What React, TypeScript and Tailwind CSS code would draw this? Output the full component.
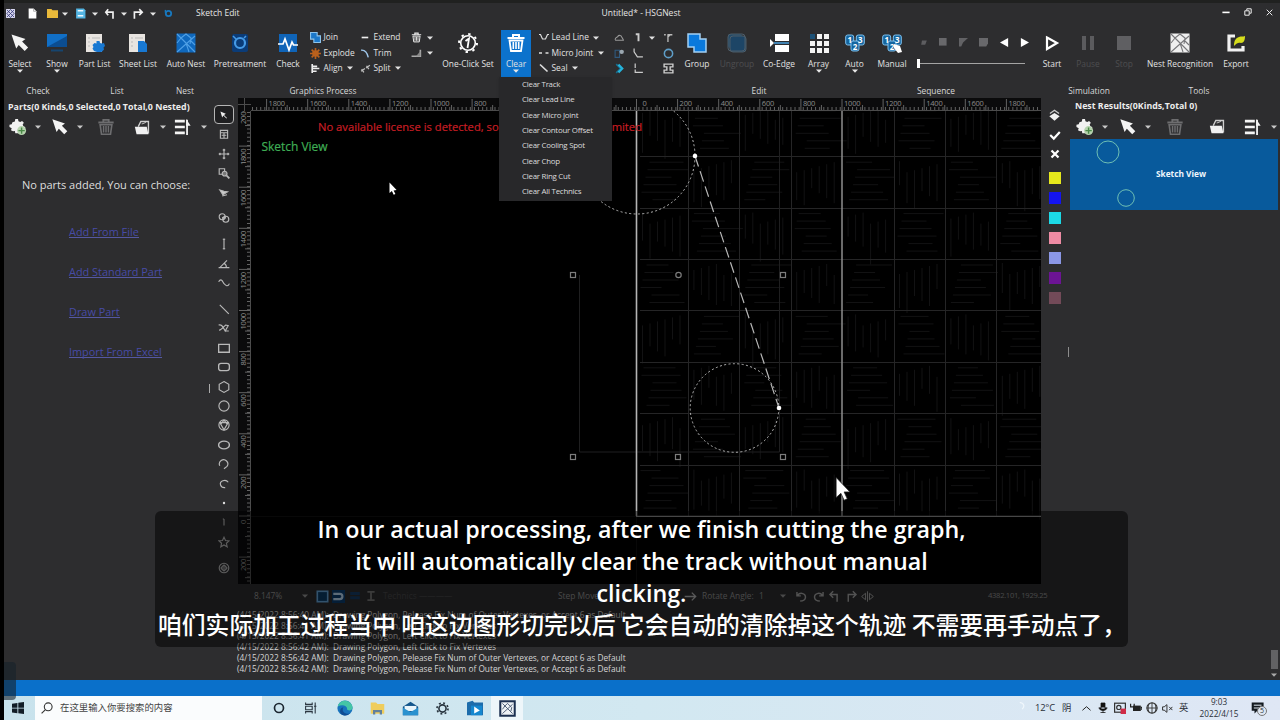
import type { ReactNode } from "react";

const Caret = ({ className = "" }: { className?: string }) => (
  <svg viewBox="0 0 6 4" className={`h-[4px] w-[6px] shrink-0 ${className}`}>
    <path d="M0 0.5h6L3 3.7z" fill="currentColor" />
  </svg>
);

const Icon = ({
  children,
  className = "h-5 w-5",
  box = 20,
}: {
  children: ReactNode;
  className?: string;
  box?: number;
}) => (
  <svg
    viewBox={`0 0 ${box} ${box}`}
    fill="none"
    stroke="none"
    className={`shrink-0 ${className}`}
  >
    {children}
  </svg>
);

const Pointer = ({ className = "h-5 w-5" }: { className?: string }) => (
  <Icon className={className}>
    <path d="M1.500 1.500l14 4.500-3.400 2.600 6 6-3.400 3.400-6-6L6.200 15.500z" fill="#f4f4f4" />
  </Icon>
);

const Trash = ({ color, className }: { color: string; className?: string }) => (
  <Icon className={className}>
    <path d="M1.500 5h17M7 4.500V2h6v2.500" stroke={color} strokeWidth="2" />
    <path d="M3.500 7.500h13L15 18H5z" stroke={color} strokeWidth="1.800" />
    <path d="M7.300 9v7M10 9v7M12.700 9v7" stroke={color} strokeWidth="1.600" />
  </Icon>
);

const GearPlus = () => (
  <Icon className="h-[18px] w-[18px]">
    <path
      d="M7 1h3l.5 2.500 2 1 2-1.300 2 2-1.300 2 .8 2L18 10v2l-4 5H7l-.5-2.500-2 .3-2.300-1.300L3 11.500.5 10V7.500L3 7l.8-2.200L6.500 4z"
      fill="#f1f1f1"
    />
    <circle cx="14" cy="14" r="5" fill="#b6d3ae" />
    <path d="M14 10.500v7M10.500 14h7" stroke="#4b8b48" strokeWidth="1.600" />
  </Icon>
);

const Folder = () => (
  <Icon className="h-[17px] w-[17px]">
    <path d="M5 9l3-6h9v14" stroke="#cfcfcf" strokeWidth="1.600" />
    <path d="M1 9h14l2 9H3z" fill="#f1f1f1" />
    <path d="M9 6l5-2" stroke="#cfcfcf" strokeWidth="1.200" />
  </Icon>
);

const ListArrow = () => (
  <Icon className="h-[18px] w-[18px]">
    <path d="M1 3.500h11M1 10h11M1 16.500h11" stroke="#f4f4f4" strokeWidth="3" />
    <path d="M14.500 19V2" stroke="#f4f4f4" strokeWidth="2" />
    <path d="M13.500 1l5 7.500h-5z" fill="#f4f4f4" />
  </Icon>
);

const NestGlyph = ({ line, fill }: { line: string; fill: string }) => (
  <>
    <rect x="0.500" y="0.500" width="19" height="19" fill={fill} />
    <path
      d="M1 1l18 18M1 19L19 3M5 5l5-4 5 4-1 6M1 10l4-5M10 10l3 9M14 7l5 5"
      stroke={line}
      strokeWidth="1.100"
    />
  </>
);

const RibbonButton = ({
  label,
  width,
  caret,
  dim,
  children,
}: {
  label: string;
  width: string;
  caret?: boolean;
  dim?: boolean;
  children: ReactNode;
}) => (
  <div className={`flex h-[47px] shrink-0 flex-col items-center pt-[3px] ${width}`}>
    {children}
    <span
      className={`mt-[5px] text-[8.400px] leading-[12px] whitespace-nowrap ${
        dim ? "text-[#4d4d50]" : "text-[#e2e2e2]"
      }`}
    >
      {label}
    </span>
    {caret && <Caret className="mt-[-1px] text-[#e8e8e8]" />}
  </div>
);

const SmallRow = ({
  label,
  caret,
  children,
}: {
  label?: string;
  caret?: boolean;
  children: ReactNode;
}) => (
  <div className="flex h-[15.400px] items-center gap-[2.500px]">
    {children}
    {label && <span className="text-[8.400px] whitespace-nowrap">{label}</span>}
    {caret && <Caret className="ml-0.5" />}
  </div>
);

const s = "h-[11px] w-[11px]";

const clearMenu = [
  "Clear Track",
  "Clear Lead Line",
  "Clear Micro Joint",
  "Clear Contour Offset",
  "Clear Cooling Spot",
  "Clear Chop",
  "Clear Ring Cut",
  "Clear All Technics",
];

const TitleBar = () => (
  <div className="flex h-6 shrink-0 items-center border-t-[3px] border-[#202120] text-[8.500px] text-[#e6e6e6]">
    <div className="flex w-[192px] items-center">
      <Icon className="ml-[2px] h-[9px] w-[9px]">
        <rect width="20" height="20" fill="#d8d8ee" />
        <path d="M2 2l16 16M18 2L2 18M10 1l8 9-8 9-8-9z" stroke="#34367a" strokeWidth="1.800" />
      </Icon>
      <Icon className="ml-[12px] h-[11px] w-[11px]">
        <path d="M3 1h9l5 5v13H3z" fill="#fff" />
        <path d="M12 1v5h5" stroke="#777" />
      </Icon>
      <Icon className="ml-[9px] h-[11px] w-[11px]">
        <path d="M0 2h8l2 2h10v14H0z" fill="#e9b93a" />
      </Icon>
      <Caret className="ml-[4px]" />
      <Icon className="ml-[7px] h-[11px] w-[11px]">
        <path d="M2 1h14l3 3v15H2z" fill="#53b4e2" />
        <path d="M5 5h10M5 14h10" stroke="#eef8fd" strokeWidth="3" />
      </Icon>
      <Caret className="ml-[6px]" />
      <Icon className="ml-[6px] h-[12px] w-[12px]">
        <path d="M7 2L3 7l4 5M3 7h12v11" stroke="#f0f0f0" strokeWidth="2.800" />
      </Icon>
      <Caret className="ml-[5px]" />
      <Icon className="ml-[5px] h-[12px] w-[12px]">
        <path d="M12 2l5 5-5 5M17 7H4v11" stroke="#f0f0f0" strokeWidth="2.800" />
      </Icon>
      <Caret className="ml-[6px]" />
      <Icon className="ml-[8px] h-[9px] w-[9px]">
        <circle cx="10" cy="10" r="6" stroke="#1878be" strokeWidth="4" />
        <path d="M3 2v6" stroke="#1878be" strokeWidth="3" />
      </Icon>
    </div>
    <span className="w-[300px]">Sketch Edit</span>
    <span className="w-[290px] text-center">Untitled* - HSGNest</span>
    <div className="ml-auto flex items-center gap-[14px] pr-[7px] pb-[3px]">
      <Icon className="h-[8px] w-[8px]">
        <path d="M1 11h18" stroke="#fff" strokeWidth="4" />
      </Icon>
      <Icon className="h-[8px] w-[8px]">
        <path d="M2 7h11v11H2zM7 6V2h11v11h-4" stroke="#eee" strokeWidth="2.500" />
      </Icon>
      <Icon className="h-[7px] w-[7px]">
        <path d="M2 2l16 16M18 2L2 18" stroke="#eee" strokeWidth="2.800" />
      </Icon>
    </div>
  </div>
);

const Ribbon = () => (
  <div className="h-[74px] shrink-0 pt-[6px] text-[#e2e2e2]">
    <div className="flex h-[53px]">
      <RibbonButton label="Select" width="w-[32px]" caret>
        <Pointer />
      </RibbonButton>
      <RibbonButton label="Show" width="w-[42px]" caret>
        <Icon>
          <rect y="1" width="20" height="13" fill="#116fc6" />
          <path d="M0 14L20 3v11z" fill="#0b4d91" />
          <path d="M4 17.500h12" stroke="#16456f" strokeWidth="2" />
        </Icon>
      </RibbonButton>
      <RibbonButton label="Part List" width="w-[33px]">
        <Icon>
          <rect x="1" y="1" width="16" height="18" fill="#e8e4e0" />
          <path d="M3 5h2M3 9h2M3 13h2M7 5h8" stroke="#bbb" />
          <path
            d="M11.500 8h3l.5 2 2 .5 2-.5 1 3-1.500 1.500.5 2-2.500 2.500H12l-3-1-1.500-2.500 1-1.500-1-2 2-2 2 .5z"
            fill="#1878d2"
          />
        </Icon>
      </RibbonButton>
      <RibbonButton label="Sheet List" width="w-[54px]">
        <Icon>
          <rect x="1" y="1" width="16" height="18" fill="#e8e4e0" />
          <path d="M3 5h2M3 9h2M3 13h2M7 5h8" stroke="#bbb" />
          <path d="M10 8h6l3 3v8h-9z" fill="#1878d2" />
        </Icon>
      </RibbonButton>
      <RibbonButton label="Auto Nest" width="w-[42px]">
        <Icon>
          <NestGlyph fill="#0f68bd" line="#4fa0e6" />
        </Icon>
      </RibbonButton>
      <RibbonButton label="Pretreatment" width="w-[66px]">
        <Icon>
          <rect x="2" y="1" width="16" height="18" rx="2" fill="#0b3c78" />
          <circle cx="10" cy="10" r="5" stroke="#469be6" strokeWidth="2.200" />
          <path d="M3 3l3 3M14 5l2-2" stroke="#469be6" strokeWidth="1.500" />
        </Icon>
      </RibbonButton>
      <RibbonButton label="Check" width="w-[30px]">
        <Icon>
          <rect x="1" y="1" width="18" height="18" fill="#0f64b8" />
          <path d="M0 11h5l2-5 4 11 3-8 1.500 3H20" stroke="#fff" strokeWidth="1.700" />
        </Icon>
      </RibbonButton>
      <div className="w-[57px] shrink-0 pl-[7px]">
        <SmallRow label="Join">
          <Icon className={s}>
            <path d="M1 1h12v6h6v12H7v-6H1z" fill="#1c78c9" stroke="#8dc3ea" strokeWidth="2" />
          </Icon>
        </SmallRow>
        <SmallRow label="Explode">
          <Icon className={s}>
            <path
              d="M10 0v20M0 10h20M3 3l14 14M17 3L3 17"
              stroke="#b9601c"
              strokeWidth="3"
            />
            <circle cx="10" cy="10" r="6" fill="#b9601c" />
          </Icon>
        </SmallRow>
        <SmallRow label="Align" caret>
          <Icon className={s}>
            <path d="M4 2v16M4 6h9M4 10h13M4 15h8" stroke="#eee" strokeWidth="3" />
          </Icon>
        </SmallRow>
      </div>
      <div className="w-[50px] shrink-0">
        <SmallRow label="Extend">
          <Icon className={s}>
            <path d="M3 10h12" stroke="#eee" strokeWidth="3" />
          </Icon>
        </SmallRow>
        <SmallRow label="Trim">
          <Icon className={s}>
            <path d="M2 4c8-1 11 4 13 13" stroke="#9fc6ea" strokeWidth="2.600" />
          </Icon>
        </SmallRow>
        <SmallRow label="Split" caret>
          <Icon className={s}>
            <path d="M2 15l7-5M11 9l7-5M3 11l4 6M12 5l4 6" stroke="#bbb" strokeWidth="2.400" />
          </Icon>
        </SmallRow>
      </div>
      <div className="w-[30px] shrink-0 pl-px">
        <SmallRow caret>
          <Trash color="#eee" className={s} />
        </SmallRow>
        <SmallRow caret>
          <Icon className={s}>
            <path d="M1 15h16V3" stroke="#aaa" strokeWidth="3" />
            <path d="M9 15L17 6v9z" fill="#888" />
          </Icon>
        </SmallRow>
      </div>
      <RibbonButton label="One-Click Set" width="w-[56px]">
        <Icon>
          <circle cx="10" cy="10" r="7.300" stroke="#fff" strokeWidth="1.600" />
          <circle
            cx="10"
            cy="10"
            r="9"
            stroke="#fff"
            strokeWidth="2"
            strokeDasharray="2.400 4.660"
          />
          <path d="M7.500 8l3.500-2.500L9.500 15" stroke="#fff" strokeWidth="1.800" />
        </Icon>
      </RibbonButton>
      <div className="relative ml-[5px] h-[47px] w-[30px] shrink-0 bg-[#0c72cc]">
        <RibbonButton label="Clear" width="w-[30px]" caret>
          <Trash color="#fff" />
        </RibbonButton>
        <div className="absolute top-[47px] left-[-2px] z-10 flex h-[124px] w-[113px] flex-col bg-[#28282a] shadow">
          {clearMenu.map((item) => (
            <span
              key={item}
              className="h-[15.350px] pl-[23px] text-[7.900px] leading-[15.350px] tracking-[-0.250px] whitespace-nowrap text-[#dcdcdc]"
            >
              {item}
            </span>
          ))}
        </div>
      </div>
      <div className="w-[81px] shrink-0 pl-[8px]">
        <SmallRow label="Lead Line" caret>
          <Icon className="h-[10px] w-[10px]">
            <path d="M0 3h3l4 9h6l4-9h3" stroke="#ddd" strokeWidth="2.400" />
          </Icon>
        </SmallRow>
        <SmallRow label="Micro Joint" caret>
          <Icon className="h-[10px] w-[10px]">
            <path d="M0 10h6M13 10h6" stroke="#ddd" strokeWidth="3.400" />
          </Icon>
        </SmallRow>
        <SmallRow label="Seal" caret>
          <Icon className="h-[10px] w-[10px]">
            <path d="M2 3l15 14" stroke="#ddd" strokeWidth="3.400" />
          </Icon>
        </SmallRow>
      </div>
      <div className="w-[21px] shrink-0 pl-[2px]">
        <SmallRow>
          <Icon className={s}>
            <path d="M2 15h16M2 14c0-5 4-4 5-6 2-3 6-2 7 1l3 5" stroke="#999" strokeWidth="2" />
          </Icon>
        </SmallRow>
        <SmallRow>
          <Icon className={s}>
            <path d="M2 4h8v13H2z" stroke="#30597d" strokeWidth="2" />
            <circle cx="14" cy="7" r="4" fill="#9ba7b0" />
          </Icon>
        </SmallRow>
        <SmallRow>
          <Icon className={s}>
            <path d="M4 2l8 8-8 8" stroke="#176f90" strokeWidth="3" />
            <path d="M8 3l7 7-7 7" stroke="#25b4dc" strokeWidth="4" />
          </Icon>
        </SmallRow>
      </div>
      <div className="w-[29px] shrink-0">
        <SmallRow caret>
          <Icon className={s}>
            <path d="M5 4h5v13" stroke="#ccc" strokeWidth="3.500" />
          </Icon>
        </SmallRow>
        <SmallRow>
          <Icon className={s}>
            <path d="M2 1v6l6 9h10" stroke="#ccc" strokeWidth="2.200" />
          </Icon>
        </SmallRow>
        <SmallRow>
          <Icon className={s}>
            <path d="M4 1v8M4 12v5h14" stroke="#ccc" strokeWidth="2.200" />
          </Icon>
        </SmallRow>
      </div>
      <div className="w-[17px] shrink-0 pl-px">
        <SmallRow>
          <Icon className={s}>
            <path d="M2 5h3M8 5h9M9 5v13M9 9l4-4" stroke="#bbb" strokeWidth="2.400" />
          </Icon>
        </SmallRow>
        <SmallRow>
          <Icon className={s}>
            <circle cx="10" cy="10" r="7.500" stroke="#5f9fc9" strokeWidth="2.800" />
          </Icon>
        </SmallRow>
        <SmallRow>
          <Icon className={s}>
            <path
              d="M2 7V2h16v5h-5v6h5v5H2v-5h5V7z"
              stroke="#ccc"
              strokeWidth="2.600"
            />
          </Icon>
        </SmallRow>
      </div>
      <RibbonButton label="Group" width="w-[36px]">
        <Icon>
          <path
            d="M1 1h12v5h6v13H7v-5H1z"
            fill="#0a79dc"
            stroke="#a3d0f3"
            strokeWidth="1.500"
          />
        </Icon>
      </RibbonButton>
      <RibbonButton label="Ungroup" width="w-[44px]" dim>
        <Icon>
          <rect x="1" y="1" width="14" height="14" rx="2" fill="#234a68" />
          <rect x="3" y="3" width="16" height="16" rx="3" fill="#1d4566" stroke="#4d5d69" />
          <rect x="1" y="1" width="17" height="17" rx="3" stroke="#4d5d69" />
        </Icon>
      </RibbonButton>
      <RibbonButton label="Co-Edge" width="w-[40px]">
        <Icon>
          <path d="M6 1h14v7H6zM6 12h14v7H6z" fill="#fff" />
          <path d="M5 10h15" stroke="#4aa8ea" strokeWidth="1.400" />
          <path d="M1 6l4 4-4 4z" fill="#fff" />
        </Icon>
      </RibbonButton>
      <RibbonButton label="Array" width="w-[39px]" caret>
        <Icon>
          <path
            d="M8 1h5v5H8zM15 1h5v5h-5zM1 8h5v5H1zM8 8h5v5H8zM15 8h5v5h-5zM1 15h5v5H1zM8 15h5v5H8zM15 15h5v5h-5z"
            fill="#f4f4f4"
          />
          <path d="M1 1h5v5H1z" fill="#1c5076" />
        </Icon>
      </RibbonButton>
      {["Auto", "Manual"].map((label) => (
        <RibbonButton
          key={label}
          label={label}
          width={label === "Auto" ? "w-[33px]" : "w-[42px]"}
          caret={label === "Auto"}
        >
          <Icon>
            <rect x="0.700" y="2" width="8" height="10" rx="2" fill="#14659f" stroke="#7fc1ee" />
            <rect x="11.300" y="2" width="8" height="10" rx="2" fill="#14659f" stroke="#7fc1ee" />
            <rect x="6" y="8" width="8" height="10" rx="2" fill="#14659f" stroke="#7fc1ee" />
            <text x="4.700" y="10" fontSize="8" fontWeight="700" fill="#fff" textAnchor="middle">1</text>
            <text x="15.300" y="10" fontSize="8" fontWeight="700" fill="#fff" textAnchor="middle">3</text>
            <text x="10" y="16.500" fontSize="8" fontWeight="700" fill="#fff" textAnchor="middle">2</text>
            {label === "Manual" && <path d="M12 11l6 2 2 6-4 1-4-5z" fill="#fff" />}
          </Icon>
        </RibbonButton>
      ))}
      <div className="w-[120px] shrink-0 pl-[4px]">
        <div className="flex h-[24px] items-center justify-between pr-[4px] pl-[3px]">
          <Icon className="h-[8px] w-[8px]">
            <path d="M3 17L5 6h12l-4 11z" fill="#5d5d60" />
          </Icon>
          <Icon className="h-[8px] w-[8px]">
            <rect width="19" height="19" fill="#68686b" />
          </Icon>
          <Icon className="h-[9px] w-[9px]">
            <path d="M0 0h20L9 10l-4 9H0z" fill="#626265" />
          </Icon>
          <Icon className="h-[9px] w-[9px]">
            <path d="M0 0h20v12l-4 7H0z" fill="#68686b" />
          </Icon>
          <Icon className="h-[9px] w-[9px]">
            <path d="M18 0v20L0 10z" fill="#fff" />
          </Icon>
          <Icon className="h-[9px] w-[9px]">
            <path d="M2 0v20l18-10z" fill="#fff" />
          </Icon>
        </div>
        <div className="mt-[5px] flex h-[9px] items-center">
          <div className="h-[9px] w-[3px] bg-white" />
          <div className="h-px w-[105px] bg-[#a4a4a4]" />
        </div>
      </div>
      <RibbonButton label="Start" width="w-[38px]">
        <Icon>
          <path d="M5 4.500L15 10 5 16z" stroke="#fff" strokeWidth="2.200" />
        </Icon>
      </RibbonButton>
      <RibbonButton label="Pause" width="w-[34px]" dim>
        <Icon>
          <path d="M4 3h4v14H4zM12 3h4v14h-4z" fill="#5b5b5e" />
        </Icon>
      </RibbonButton>
      <RibbonButton label="Stop" width="w-[38px]" dim>
        <Icon>
          <path d="M3 3h14v14H3z" fill="#5f5f62" />
        </Icon>
      </RibbonButton>
      <RibbonButton label="Nest Recognition" width="w-[74px]">
        <Icon>
          <NestGlyph fill="#efefef" line="#77777a" />
        </Icon>
      </RibbonButton>
      <RibbonButton label="Export" width="w-[38px]">
        <Icon>
          <path d="M9 3H3v14h14v-4" stroke="#f1f1f1" strokeWidth="3.200" />
          <path d="M8 13c0-6 2-8 5-9 2-1 4 0 6-1 0 4-1 7-4 7-3-.5-4 0-7 3z" fill="#d6dd1d" />
        </Icon>
      </RibbonButton>
    </div>
    <div className="flex text-center text-[8.400px] leading-[15px] text-[#d8d8d8]">
      <span className="w-[68px]">Check</span>
      <span className="w-[90px]">List</span>
      <span className="w-[46px]">Nest</span>
      <span className="mr-[242px] w-[230px]">Graphics Process</span>
      <span className="w-[158px]">Edit</span>
      <span className="w-[196px]">Sequence</span>
      <span className="w-[110px]">Simulation</span>
      <span className="w-[110px]">Tools</span>
    </div>
  </div>
);

const links = ["Add From File", "Add Standard Part", "Draw Part", "Import From Excel"];

const PartsPanel = () => (
  <div className="w-[206px] shrink-0">
    <div className="pt-[1px] pl-[4px] text-[8.850px] leading-4 font-bold whitespace-nowrap text-[#ececec]">
      Parts(0 Kinds,0 Selected,0 Total,0 Nested)
    </div>
    <div className="flex h-6 items-center text-[#c8c8c8]">
      <div className="ml-[5px]">
        <GearPlus />
      </div>
      <Caret className="ml-[8px]" />
      <Pointer className="ml-[10px] h-[18px] w-[18px]" />
      <Caret className="ml-[8px]" />
      <Trash color="#6d6d6f" className="ml-[14px] h-[18px] w-[18px]" />
      <div className="ml-[19px]">
        <Folder />
      </div>
      <Caret className="ml-[9px]" />
      <div className="ml-[8px]">
        <ListArrow />
      </div>
      <Caret className="ml-[9px]" />
    </div>
    <p className="mt-[38px] pl-[18px] text-[11px] leading-4 whitespace-nowrap text-[#dedede]">
      No parts added, You can choose:
    </p>
    <div className="mt-[31px] flex flex-col items-start gap-[26px] pl-[65px]">
      {links.map((link) => (
        <a
          key={link}
          className="h-[14px] border-b border-[#5558a2] text-[10.900px] leading-[15px] whitespace-nowrap text-[#474ba6]"
        >
          {link}
        </a>
      ))}
    </div>
  </div>
);

const toolGroups: ReactNode[][] = [
  [
    <path d="M4 4l9 4-3 2 5 5-1 1-5-5-2 3z" fill="#eee" stroke="none" />,
    <path d="M4 4h12v13H4zM4 8h12M10 8v9M6 12h8" />,
    <path d="M10 2v16M2 10h16M8 4l2-2 2 2M8 16l2 2 2-2M4 8l-2 2 2 2M16 8l2 2-2 2" />,
    <>
      <path d="M2 3h9v9H2z" />
      <circle cx="11" cy="11" r="4" fill="#777" />
      <path d="M14 14l5 5" strokeWidth="3" />
    </>,
    <path d="M3 5l5 8 8-5-6-1zM7 15l8-2" fill="#ccc" />,
  ],
  [
    <>
      <circle cx="7" cy="8" r="5" />
      <circle cx="13" cy="12" r="5" />
      <path d="M7 10l6-1" strokeWidth="3" />
    </>,
  ],
  [
    <path d="M10 1v18M8 2h4M8 18h4" />,
    <path d="M1 16h18M3 16L15 4M10 9c3 1 4 4 4 7" />,
    <path d="M1 8c5-8 7 1 9 3s6 7 9 0" />,
  ],
  [
    <path d="M3 3l15 15" />,
    <path d="M1 5c5-1 7 2 11 10l5-9-4-1c-4 3-6 7-11 9M12 15h6" />,
    <path d="M1 4h18v13H1z" strokeWidth="2.400" />,
    <rect x="1" y="4" width="18" height="12" rx="4" strokeWidth="2.400" />,
    <path d="M10 1l8 4.500v9L10 19l-8-4.500v-9z" />,
    <circle cx="10" cy="10" r="8.500" />,
    <>
      <circle cx="10" cy="10" r="8.500" />
      <path d="M3 6h14l-7 12zM10 2L5 8M10 2l5 6" />
    </>,
    <ellipse cx="10" cy="10" rx="9" ry="6.500" strokeWidth="2.400" />,
    <path d="M3 13a7 7 0 1 1 12 1l-5 4" />,
    <path d="M17 7a7 6 0 1 0-5 9" />,
    <circle cx="10" cy="10" r="2" fill="#ddd" stroke="none" />,
    <path d="M10 5v11M8 5h2" />,
    <path d="M10 2l2.500 5.500 6 .6-4.500 4 1.300 6L10 15l-5.300 3 1.300-6-4.500-4 6-.5z" />,
  ],
  [
    <>
      <circle cx="10" cy="10" r="8" />
      <circle cx="10" cy="10" r="4" />
      <path d="M10 2v16M2 10h16" strokeWidth="1" />
    </>,
  ],
];

const DrawTools = () => (
  <div className="flex w-[28px] shrink-0 flex-col gap-[6.500px] pt-[7.300px]">
    {toolGroups.map((group, g) => (
      <div key={g}>
        {group.map((shape, i) => (
          <div key={i} className="flex h-[19.400px] items-center justify-center">
            <div
              className={`flex h-[19px] w-[20px] items-center justify-center rounded-sm ${
                g === 0 && i === 0 ? "border border-[#b5b5b5] bg-[#1f1f21]" : ""
              }`}
            >
              <svg
                viewBox="0 0 20 20"
                fill="none"
                stroke="#b9b9b9"
                strokeWidth={1.9}
                className="h-[12px] w-[12px]"
              >
                {shape}
              </svg>
            </div>
          </div>
        ))}
      </div>
    ))}
  </div>
);

// Sheet origin sits at (398.5, 418) in the drawing
const UNIT = 41.1;
const CELL = 51.4;
const columns = Array.from({ length: 19 }, (_, i) => i - 9);
const rows = Array.from({ length: 12 }, (_, i) => i - 1);
const gridX = [1, 2, 3, 5, 6, 7];
const gridY = [1, 2, 3, 4, 5, 6, 7];
const hatch = Array.from({ length: 64 * 6 }, (_, i) => {
  const cell = Math.floor(i / 6);
  const col = cell % 8;
  const row = Math.floor(cell / 8);
  const left = 398.5 + col * CELL;
  const top = 418 - (row + 1) * CELL;
  const step = 6 + (i % 6) * 7.5;
  const start = 4 + ((i * 37) % 13);
  const len = 20 + ((i * 29) % 22);
  return (col + row) % 2
    ? `M${left + step} ${top + start}v${len}`
    : `M${left + start} ${top + step}h${len}`;
});
const handles = [
  [335, 177],
  [545, 177],
  [335, 359],
  [440, 359],
  [545, 359],
];

const Canvas = () => (
  <svg viewBox="0 0 803 486" fill="none" className="h-[486px] w-[803px] shrink-0 bg-black">
    <path d={hatch.join("")} stroke="#121213" />
    <g stroke="#252526">
      {gridX.map((n) => (
        <path key={n} d={`M${Math.round(398.5 + n * CELL) + 0.5} 13v405`} />
      ))}
      {gridY.map((n) => (
        <path key={n} d={`M402 ${Math.round(418 - n * CELL) + 0.5}h401`} />
      ))}
      <path d="M341.500 177v177h200V13" stroke="#1f1f20" />
      <path d="M398.500 418v68M13 418.500h385" stroke="#101010" />
    </g>
    <path d="M398.500 13v405" stroke="#b4b4b4" strokeWidth="1.600" />
    <path d="M604 13v405" stroke="#8e8e8e" strokeWidth="1.500" />
    <path d="M398 418.300h405" stroke="#8e8e8e" strokeWidth="1.200" />
    <g stroke="#b8b8b8">
      <circle cx="399" cy="58" r="58" strokeDasharray="2 2.400" />
      <circle cx="496.500" cy="310" r="44.300" strokeDasharray="2 2.400" />
      <path d="M457 58l84 252" strokeDasharray="11 5" strokeWidth="1.200" />
    </g>
    <circle cx="457" cy="58" r="2.300" fill="#fff" />
    <circle cx="541" cy="310" r="2.300" fill="#fff" />
    <g stroke="#7c7c7c" strokeWidth="1.200">
      {handles.map(([x, y]) => (
        <rect key={`${x}-${y}`} x={x - 2.5} y={y - 2.5} width="5" height="5" />
      ))}
      <circle cx="440.500" cy="177" r="2.700" />
    </g>

    <rect width="803" height="13" fill="#0b0b0c" />
    <rect width="13" height="486" fill="#0b0b0c" />
    <g stroke="#636363">
      <path d="M13 12.500h790M12.500 13v473" stroke="#4c4c4c" />
      <path d="M14 10.500h789" strokeDasharray="1 3.110" strokeWidth="3" />
      <path d="M10.500 14v472" strokeDasharray="1 3.110" strokeWidth="3" />
      {columns.map((n) => (
        <path key={n} d={`M${398.5 + n * UNIT} 1v11M${398.5 + (n + 0.5) * UNIT} 7v5`} />
      ))}
      {rows.map((n) => (
        <path key={n} d={`M1 ${418 - n * UNIT}h11M7 ${418 - (n - 0.5) * UNIT}h5`} />
      ))}
    </g>
    <g fill="#8b8b8b" fontSize="7.500">
      {columns.map((n) => (
        <text
          key={n}
          x={398.5 + n * UNIT + (n === 0 ? 6 : 2)}
          y="8.300"
          letterSpacing="-0.200"
        >
          {Math.abs(n * 200)}
        </text>
      ))}
      {rows.map((n) => (
        <text
          key={n}
          letterSpacing="-0.200"
          transform={`translate(7.500 ${418 - n * UNIT + (n === 0 ? 8 : Math.abs(n) >= 5 ? 19 : 14)}) rotate(-90)`}
        >
          {Math.abs(n * 200)}
        </text>
      ))}
    </g>
    <rect width="13" height="13" fill="#0b0b0c" />
    <path d="M6.500 0v13M0 6.500h13" stroke="#4c4c4c" />

    <text x="80" y="33" fontSize="11.200" fill="#c81e24" stroke="#c81e24" strokeWidth="0.200" textLength="324">
      No available license is detected, some functions will be limited
    </text>
    <text x="23.500" y="53" fontSize="12" fill="#3fae55" stroke="#3fae55" strokeWidth="0.200" textLength="66">
      Sketch View
    </text>
    <path
      d="M151.500 84.500v10.500l2.400-2 1.800 3.700 1.700-.8-1.800-3.500 3-.4z"
      fill="#fff"
    />
  </svg>
);

const swatches = [
  "bg-[#e6e81c]",
  "bg-[#1414f0]",
  "bg-[#1cd9e6]",
  "bg-[#ee8ba4]",
  "bg-[#8b97e6]",
  "bg-[#6c1494]",
  "bg-[#724a58]",
];

const ColorTools = () => (
  <div className="flex w-[27px] shrink-0 flex-col items-center pt-[11px]">
    <Icon className="h-[13px] w-[13px]">
      <path d="M3 7l7-5 7 5" stroke="#ccc" strokeWidth="2" />
      <path d="M2 11l8-5 8 5-8 7z" fill="#f1f1f1" />
    </Icon>
    <Icon className="mt-[7px] h-[12px] w-[12px]">
      <path d="M2 10l6 6L18 5" stroke="#fff" strokeWidth="3.600" />
    </Icon>
    <Icon className="mt-[8px] mb-[13px] h-[10px] w-[10px]">
      <path d="M3 3l14 14M17 3L3 17" stroke="#fff" strokeWidth="4.500" />
    </Icon>
    <div className="flex flex-col gap-2">
      {swatches.map((color) => (
        <div key={color} className={`h-3 w-3 ${color}`} />
      ))}
    </div>
  </div>
);

const ResultsPanel = () => (
  <div className="min-w-0 flex-1">
    <div className="pl-[7px] text-[8.800px] leading-4 font-bold whitespace-nowrap text-[#ececec]">
      Nest Results(0Kinds,Total 0)
    </div>
    <div className="flex h-[25px] items-center overflow-hidden text-[#c8c8c8]">
      <div className="ml-[8px]">
        <GearPlus />
      </div>
      <Caret className="ml-[8px]" />
      <Pointer className="ml-[11px] h-[18px] w-[18px]" />
      <Caret className="ml-[8px]" />
      <Trash color="#6d6d6f" className="ml-[15px] h-[18px] w-[18px]" />
      <div className="ml-[25px]">
        <Folder />
      </div>
      <div className="ml-[18px]">
        <ListArrow />
      </div>
      <Caret className="ml-[9px]" />
    </div>
    <div className="mr-[2px] ml-[2px] flex h-[71px] items-center bg-[#085a9c]">
      <svg viewBox="0 0 80 71" className="h-[71px] w-[80px]" fill="none" stroke="#6fbfb4">
        <circle cx="38" cy="13" r="11" />
        <circle cx="56" cy="59" r="8.300" />
      </svg>
      <span className="ml-[6px] text-[8.300px] font-bold text-[#eef6fc]">Sketch View</span>
    </div>
    <div className="mt-[137px] h-[10px] w-px bg-[#8d8d8d]" />
  </div>
);

const StatusBar = () => (
  <div className="flex h-6 items-center pl-[250px] text-[8.400px] whitespace-nowrap text-[#929292]">
    <span className="w-[48px]">8.147%</span>
    <Caret />
    <Icon className="ml-[8px] h-[13px] w-[13px]">
      <rect x="2" y="2" width="16" height="16" fill="#0b3c66" stroke="#64a4d8" strokeWidth="2.500" />
    </Icon>
    <Icon className="ml-[3px] h-[13px] w-[13px]">
      <rect width="20" height="20" fill="#0b3c6e" />
      <path d="M2 6h10a4 4 0 0 1 0 8H2" stroke="#b9d6f0" strokeWidth="3.400" />
    </Icon>
    <Icon className="ml-[4px] h-[12px] w-[12px]">
      <path d="M2 6h16M2 13h16" stroke="#173c66" strokeWidth="5" />
    </Icon>
    <Icon className="ml-[4px] h-[12px] w-[12px]">
      <path d="M4 3h12M4 17h12M10 4v12" stroke="#777" strokeWidth="3" />
    </Icon>
    <span className="ml-[6px] w-[175px] text-[#48484a]">Technics ————</span>
    <span className="w-[126px]">Step Move:</span>
    <Icon className="h-[13px] w-[13px]">
      <path d="M1 10h17M12 4l6 6-6 6" stroke="#b5b5b5" strokeWidth="2" />
    </Icon>
    <span className="ml-[5px] w-[57px]">Rotate Angle:</span>
    <span className="w-[21px]">1</span>
    <Caret />
    <div className="ml-[9px] flex gap-[3.500px]">
      <Icon className="h-[13px] w-[13px]">
        <path d="M3 3v6h6M4 8c4-5 13-3 12 4-1 4-4 5-8 5" stroke="#a5a5a5" strokeWidth="2.200" />
      </Icon>
      <Icon className="h-[13px] w-[13px]">
        <path d="M17 3v6h-6M16 8C12 3 3 5 4 12c1 4 4 5 8 5" stroke="#a5a5a5" strokeWidth="2.200" />
      </Icon>
      <Icon className="h-[13px] w-[13px]">
        <path d="M8 2L3 7l5 5M3 7h11v11" stroke="#a5a5a5" strokeWidth="2.200" />
      </Icon>
      <Icon className="h-[13px] w-[13px]">
        <path d="M12 2l5 5-5 5M17 7H5v11" stroke="#a5a5a5" strokeWidth="2.200" />
      </Icon>
      <Icon className="h-[13px] w-[13px]">
        <path d="M10 2v16M7 5v10l-6-5zM13 5v10l6-5z" stroke="#a5a5a5" strokeWidth="1.500" />
      </Icon>
    </div>
    <span className="ml-[114px] text-[7.600px] tracking-[-0.300px]">4382.101, 1929.25</span>
  </div>
);

const logs = [
  "(4/15/2022 8:56:40 AM):  Drawing Polygon, Pelease Fix Num of Outer Vertexes, or Accept 6 as Default",
  "(4/15/2022 8:56:41 AM):  Drawing Polygon, Left Click to Fix Vertexes",
  "(4/15/2022 8:56:41 AM):  Drawing Polygon, Left Click to Fix Vertexes",
  "(4/15/2022 8:56:42 AM):  Drawing Polygon, Left Click to Fix Vertexes",
  "(4/15/2022 8:56:42 AM):  Drawing Polygon, Pelease Fix Num of Outer Vertexes, or Accept 6 as Default",
  "(4/15/2022 8:56:42 AM):  Drawing Polygon, Pelease Fix Num of Outer Vertexes, or Accept 6 as Default",
];

const LogView = () => (
  <div className="flex h-[72px] justify-between pt-[2px] pr-[2px] pl-[233px]">
    <div className="text-[8.320px] leading-[10.700px] whitespace-pre text-[#d5d5d5]">
      {logs.map((line, i) => (
        <div key={i}>{line}</div>
      ))}
    </div>
    <div className="flex w-[8px] flex-col items-center pt-[40px] text-[#aaa]">
      <div className="h-[19px] w-[7px] bg-[#626264]" />
      <Caret className="mt-[4px]" />
    </div>
  </div>
);

const TaskBar = () => (
  <div className="flex h-[24px] shrink-0 items-center bg-gradient-to-r from-[#c8e2ec] via-[#d2e8f1] to-[#dfe7f5] text-[#2a3038]">
    <div className="flex w-[31px] justify-center pr-[3px]">
      <Icon className="h-[12px] w-[12px]">
        <path d="M0 3l9-1.500V9.500H0zM10.500 1.300L20 0v9.500h-9.500zM0 10.700h9v8L0 17.300zM10.500 10.700H20V20l-9.500-1.300z" fill="#111c26" />
      </Icon>
    </div>
    <div className="flex h-full w-[227px] items-center bg-[#fafcfd] pl-[6px]">
      <Icon className="h-[12px] w-[12px]">
        <circle cx="12" cy="8" r="6.500" stroke="#333" strokeWidth="1.800" />
        <path d="M7 13l-6 6" stroke="#333" strokeWidth="1.800" />
      </Icon>
      <span className="ml-[7px] text-[9.400px] text-[#444]">在这里输入你要搜索的内容</span>
    </div>
    <Icon className="ml-[11px] h-[12px] w-[12px]">
      <circle cx="10" cy="10" r="7.500" stroke="#1b2630" strokeWidth="2.800" />
    </Icon>
    <Icon className="ml-[20px] h-[12px] w-[12px]">
      <path d="M1 1v3h11V1M1 7h11v6H1zM1 19v-3h11v3M17 1v18M15 7h4" stroke="#2b3640" strokeWidth="1.800" />
    </Icon>
    <Icon className="ml-[20px] h-[16px] w-[16px]">
      <circle cx="10" cy="10" r="9.500" fill="#1873bd" />
      <path d="M1 8C3-1 17-2 19.500 9c0 4-5 5-7 3 1-5-6-7-11.500-4z" fill="#45c5a6" />
      <path d="M8 9c-3 5 2 9 8 8-2 2-5 3-8 2.200C2 17 3 10 8 9z" fill="#0f4c93" />
    </Icon>
    <Icon className="ml-[17px] h-[15px] w-[15px]">
      <path d="M1 2h7l2 2h9v13H1z" fill="#efcd5c" />
      <path d="M4 18v-6h12v6h-3v-3H7v3z" fill="#62809a" />
    </Icon>
    <Icon className="ml-[17px] h-[17px] w-[17px]">
      <path d="M1 8l9-6 9 6v10H1z" fill="#14568c" />
      <path d="M3 7h14v6H3z" fill="#e9f5fb" />
      <path d="M1 9l9 5 9-5v9H1z" fill="#2991cf" />
    </Icon>
    <Icon className="ml-[17px] h-[13px] w-[13px]">
      <circle cx="10" cy="10" r="5.500" stroke="#27333d" strokeWidth="2.500" />
      <circle cx="10" cy="10" r="8.500" stroke="#27333d" strokeWidth="2.500" strokeDasharray="3 3.670" />
    </Icon>
    <Icon className="ml-[18px] h-[16px] w-[16px]">
      <path d="M0 3l7-2 2 2h11v16H0z" fill="#1c6cab" />
      <path d="M5 7h14v12H5z" fill="#1587cf" />
      <path d="M9 8l7 5-7 4z" fill="#fff" />
    </Icon>
    <div className="ml-[8px] flex h-full w-[32px] items-center justify-center bg-[#eef6fa]">
      <Icon className="h-[17px] w-[17px]">
        <rect x="1.500" y="1.500" width="17" height="17" fill="#eef2f6" stroke="#1c2f50" strokeWidth="2.400" />
        <path d="M4 4l12 12M4 16L16 5M6 8l4-4 5 5-1 4M4 11l3-4" stroke="#4b5a73" strokeWidth="1.100" />
      </Icon>
    </div>
    <div className="ml-auto flex items-center text-[9.400px]">
      <Icon className="mb-1 h-[8px] w-[8px]">
        <path d="M7 1c11 2 13 10 6 17" stroke="#f0f7fc" strokeWidth="3" />
      </Icon>
      <span className="ml-[10px] w-[27px] tracking-[-0.200px]">12°C</span>
      <span className="w-[20px]">阴</span>
      <Icon className="h-[9px] w-[9px]">
        <path d="M1 14l9-8 9 8" stroke="#222" strokeWidth="2.200" />
      </Icon>
      <Icon className="ml-[7px] h-[12px] w-[10px]">
        <path d="M6 0h8v12H6zM2 9c0 8 16 8 16 0M10 15v5M5 19h10" fill="#111" stroke="#111" strokeWidth="1.500" />
      </Icon>
      <Icon className="ml-[6px] h-[12px] w-[12px]">
        <rect x="1" y="2" width="18" height="15" stroke="#333" strokeWidth="2" />
        <circle cx="8" cy="9" r="3.500" stroke="#333" strokeWidth="2" />
        <rect x="11" y="11" width="9" height="9" fill="#cf2b47" />
      </Icon>
      <Icon className="ml-[4px] h-[12px] w-[12px]">
        <rect x="5" y="6" width="13" height="9" fill="#222" />
        <path d="M1 3v5h6V3M18 9h2v3h-2" stroke="#222" strokeWidth="2" />
      </Icon>
      <Icon className="ml-[4px] h-[12px] w-[12px]">
        <circle cx="10" cy="10" r="8.500" stroke="#333" strokeWidth="1.800" />
        <path d="M1 10h18M10 1v18M5 3c-2 5-2 9 0 14M15 3c2 5 2 9 0 14" stroke="#333" strokeWidth="1.500" />
      </Icon>
      <Icon className="ml-[4px] h-[11px] w-[11px]">
        <path d="M1 7h3l5-4v14l-5-4H1zM13 7l6 6M19 7l-6 6" stroke="#333" strokeWidth="1.800" />
      </Icon>
      <span className="ml-[6px] w-[17px]">英</span>
      <div className="flex w-[46px] flex-col items-center text-[8.200px] leading-[12px]">
        <span>9:03</span>
        <span>2022/4/15</span>
      </div>
      <div className="relative mr-[15px] ml-[9px]">
        <Icon className="h-[14px] w-[14px]">
          <path d="M1 2h17v12H9l-4 4v-4H1z" fill="#141a20" />
          <path d="M4 6h11M4 10h11" stroke="#e5edf5" strokeWidth="1.400" />
        </Icon>
        <span className="absolute top-[5px] left-[6px] flex h-[10px] w-[10px] items-center justify-center rounded-full border border-[#777] bg-[#dfe7f3] text-[7px]">
          5
        </span>
      </div>
    </div>
  </div>
);

const Subtitles = () => (
  <div className="absolute top-[511px] left-[155px] z-20 h-[136px] w-[973px] rounded-md bg-black/50 text-center text-white">
    <p className="pt-[2px] text-[23.250px] leading-8 font-semibold">
      In our actual processing, after we finish cutting the graph,
      <br />
      it will automatically clear the track without manual
      <br />
      clicking.
    </p>
    <p className="mt-[-1px] pl-[3px] text-left text-[23.800px] leading-8 font-medium whitespace-nowrap font-['Noto_Sans_CJK_SC',sans-serif]">
      咱们实际加工过程当中 咱这边图形切完以后 它会自动的清除掉这个轨迹 不需要再手动点了，
    </p>
  </div>
);

const App = () => {
  return (
    <div className="relative flex h-[720px] w-[1280px] flex-col overflow-hidden bg-[#2d2d2f] font-['Open_Sans','Noto_Sans_CJK_SC',sans-serif]">
      <div className="flex min-h-0 flex-1 flex-col border-l-4 border-black">
        <TitleBar />
        <Ribbon />
        <div className="flex h-[486px] shrink-0">
          <PartsPanel />
          <DrawTools />
          <Canvas />
          <ColorTools />
          <ResultsPanel />
        </div>
        <StatusBar />
        <LogView />
        <div className="h-4 shrink-0 bg-[#0a70ca]" />
        <TaskBar />
      </div>
      <div className="absolute top-[384px] left-[209px] h-[9px] w-px bg-[#aaa]" />
      <div className="absolute top-[662px] left-[4px] h-[38px] w-[12px] rounded-r-sm bg-[#15222c]/60" />
      <Subtitles />
      <svg viewBox="0 0 16 24" className="absolute top-[475px] left-[834px] z-30 h-[26px] w-[17px]">
        <path d="M2 2v19l4.500-4 3 6.500 3-1.300-3-6.500H15z" fill="#fff" stroke="#222" strokeWidth="0.700" />
      </svg>
    </div>
  );
};

export default App;
